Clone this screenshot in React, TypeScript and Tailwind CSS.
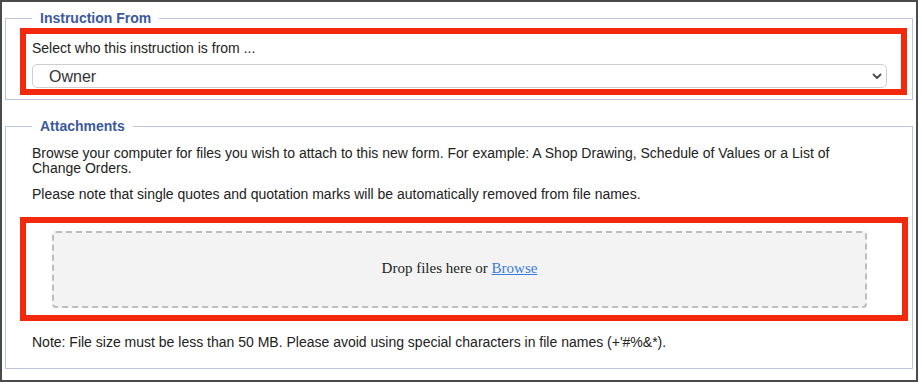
import React from "react";

export default function App(): React.ReactElement {
  return (
    <div className="h-[385px] w-[922px] bg-white font-['Liberation_Sans',Arial,sans-serif] text-[14px] leading-[15px] text-[#222]">
      <div className="h-[382px] w-[918px] border-2 border-[#4a4a4a] bg-white px-[3px] pt-[9px]">
        <fieldset className="border border-[#bac5e0] pb-[4px] pl-[14px] pr-[5px] pt-[2px]">
          <legend className="ml-3 px-2 text-[14px] font-bold leading-[15px] text-[#3c5a9a]">
            Instruction From
          </legend>
          <div className="border-[6px] border-[#f2290c] pb-[1px] pl-[6px] pr-[14px] pt-[7px]">
            <div>Select who this instruction is from ...</div>
            <div className="relative mt-[8px] h-[24px] rounded-[5px] border border-[#cfcfcf] bg-white">
              <span className="absolute left-[16px] top-[3px] text-[16px] leading-[17px] text-[#333]">
                Owner
              </span>
              <svg
                className="absolute right-[4px] top-[8px]"
                width="10"
                height="7"
                viewBox="0 0 10 7"
                fill="none"
                stroke="#4a4a4a"
                strokeWidth="1.8"
                strokeLinecap="round"
                strokeLinejoin="round"
              >
                <path d="M1.5 1.5 L5 5 L8.5 1.5" />
              </svg>
            </div>
          </div>
        </fieldset>

        <fieldset className="mt-[19px] border border-[#bac5e0] pb-[18px] pl-[14px] pr-[4px]">
          <legend className="ml-3 px-2 text-[14px] font-bold leading-[15px] text-[#3c5a9a]">
            Attachments
          </legend>
          <p className="mt-[12px] w-[850px] pl-[12px]">
            Browse your computer for files you wish to attach to this new form. For example: A Shop Drawing,
            Schedule of Values or a List of Change Orders.
          </p>
          <p className="mt-[11px] pl-[12px]">
            Please note that single quotes and quotation marks will be automatically removed from file names.
          </p>
          <div className="mt-[15px] border-[6px] border-[#f2290c] pb-[7px] pl-[26px] pr-[35px] pt-[8px]">
            <div className="flex h-[77px] items-center justify-center rounded-[4px] border-2 border-dashed border-[#bdbdbd] bg-[#f3f3f3] pb-[3px] font-['Liberation_Serif','Times_New_Roman',serif] text-[15px] text-[#222]">
              <span>
                Drop files here or{" "}
                <a href="#" className="text-[#3b7ddd] underline">
                  Browse
                </a>
              </span>
            </div>
          </div>
          <p className="mt-[14px] pl-[12px]">
            Note: File size must be less than 50 MB. Please avoid using special characters in file names (+'#%&amp;*).
          </p>
        </fieldset>
      </div>
    </div>
  );
}
